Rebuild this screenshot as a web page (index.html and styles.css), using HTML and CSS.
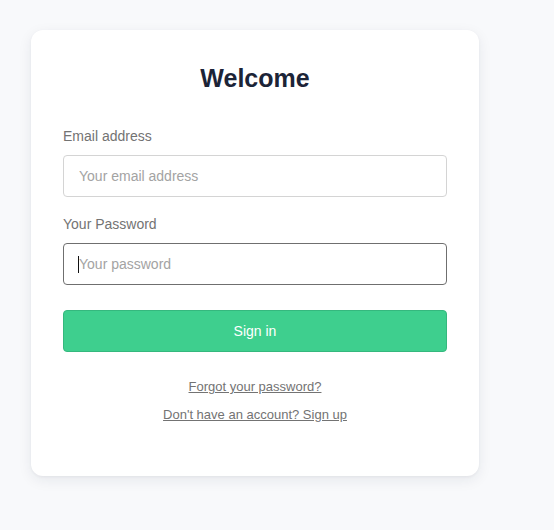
FILE: index.html
```html
<!DOCTYPE html>
<html lang="en">
<head>
<meta charset="utf-8">
<title>Welcome</title>
<link rel="stylesheet" href="styles.css">
</head>
<body>
<main class="card">
  <h1 class="title">Welcome</h1>
  <form class="form">
    <label class="label" for="email">Email address</label>
    <input class="input" id="email" type="email" placeholder="Your email address">
    <label class="label label-second" for="password">Your Password</label>
    <div class="field">
      <input class="input input-focused" id="password" type="password" placeholder="Your password">
      <span class="caret"></span>
    </div>
    <button class="button" type="button">Sign in</button>
    <div class="links">
      <a class="link" href="#">Forgot your password?</a>
      <a class="link" href="#">Don't have an account? Sign up</a>
    </div>
  </form>
</main>
</body>
</html>
```
FILE: styles.css
```css
html, body {
  margin: 0;
  padding: 0;
  background: #f8f9fb;
}
body {
  padding: 30px 0 0 31px;
  font-family: "Liberation Sans", Arial, sans-serif;
  min-height: 530px;
  box-sizing: border-box;
}
.card {
  width: 448px;
  box-sizing: border-box;
  padding: 32px 32px 51px;
  background: #ffffff;
  border-radius: 12px;
  box-shadow: 0 4px 14px rgba(30, 40, 60, 0.08), 0 1px 3px rgba(30, 40, 60, 0.05);
}
.title {
  margin: 0 0 33px;
  padding-top: 1px;
  font-size: 25px;
  line-height: 30px;
  font-weight: 700;
  text-align: center;
  color: #1c2437;
}
.form {
  display: flex;
  flex-direction: column;
}
.label {
  font-size: 14px;
  line-height: 20px;
  color: #737373;
  margin-bottom: 9px;
}
.label-second {
  margin-top: 17px;
}
.field {
  position: relative;
}
.input {
  display: block;
  width: 100%;
  height: 42px;
  box-sizing: border-box;
  padding: 0 15px;
  font-family: inherit;
  font-size: 14px;
  color: #333;
  background: #fff;
  border: 1px solid #d4d4d4;
  border-radius: 4px;
  outline: none;
}
.input::placeholder {
  color: #a3a3a3;
}
.input-focused {
  border-color: #6f6f6f;
}
.caret {
  position: absolute;
  left: 15px;
  top: 13px;
  width: 1px;
  height: 17px;
  background: #111;
}
.button {
  margin-top: 25px;
  height: 42px;
  width: 100%;
  border: 1px solid #35b87e;
  border-radius: 4px;
  background: #3ecf8e;
  color: #ffffff;
  font-family: inherit;
  font-size: 14px;
  cursor: pointer;
}
.links {
  margin-top: 25px;
  display: flex;
  flex-direction: column;
  align-items: center;
  gap: 8px;
}
.link {
  font-size: 13px;
  line-height: 20px;
  color: #737373;
  text-decoration: underline;
}
```
